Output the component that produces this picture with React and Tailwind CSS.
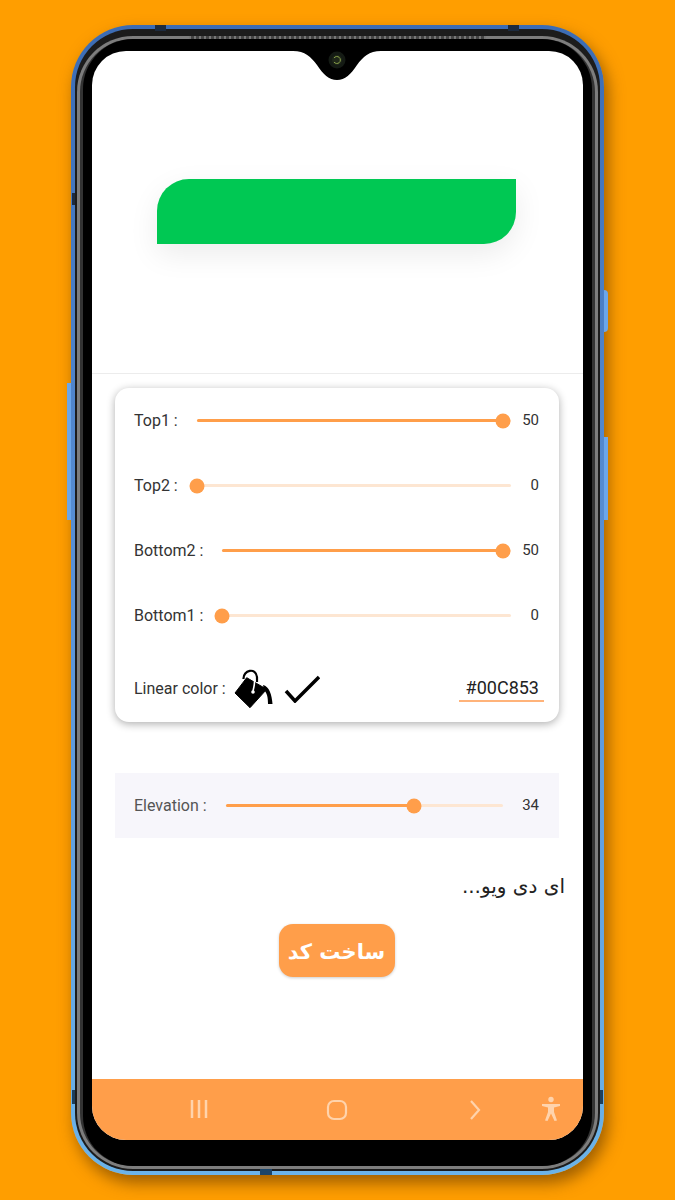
import React from "react";

const rows = [
  { label: "Top1 :", value: 50 },
  { label: "Top2 :", value: 0 },
  { label: "Bottom2 :", value: 50 },
  { label: "Bottom1 :", value: 0 },
];

// Track with thumb; inset = px of track left past the thumb at max
function Slider({ value, inset = 8 }) {
  const pct = value / 50;
  return (
    <div className="relative h-[3px] flex-1 rounded-full bg-[#fde6d2]">
      <div
        className="absolute left-0 top-0 h-full rounded-full bg-[#ff9e4a]"
        style={{ width: `calc((100% - ${inset}px) * ${pct})` }}
      />
      <div
        className="absolute top-1/2 h-[15px] w-[15px] -translate-x-1/2 -translate-y-1/2 rounded-full bg-[#ff9e4a]"
        style={{ left: `calc((100% - ${inset}px) * ${pct})` }}
      />
    </div>
  );
}

function BucketIcon() {
  return (
    <svg width="40" height="40" viewBox="0 0 40 40" className="block">
      <path d="M1 24 L12.700 8.700 L32.700 20.300 L16 38.700 Z" fill="#000" strokeLinejoin="round" stroke="#000" strokeWidth="1" />
      <path d="M9.500 10 C9 1 22 -2 23 8 L23 13" fill="none" stroke="#000" strokeWidth="2.200" />
      <path d="M20.500 10 C21 14 20 18 19 22" fill="none" stroke="#fff" strokeWidth="1.600" />
      <circle cx="19" cy="23" r="1.800" fill="#fff" />
      <path d="M29 16 C35 17 38 26 38.500 35 L34 35 C34 28 33 24 30 21 Z" fill="#000" />
    </svg>
  );
}

function CheckIcon() {
  return (
    <svg width="36" height="28" viewBox="0 0 36 28" className="block">
      <path d="M2 16 L11 26 L35 2" fill="none" stroke="#000" strokeWidth="3.500" />
    </svg>
  );
}

function NavBar() {
  return (
    <div className="relative mt-auto h-[61px] bg-[#ff9e4a] text-[#ffd3ac]">
      <svg width="18" height="20" viewBox="0 0 18 20" className="absolute left-[98px] top-[20px]">
        <path d="M2 1 V19 M9 1 V19 M16 1 V19" stroke="currentColor" strokeWidth="2.500" />
      </svg>
      <svg width="22" height="22" viewBox="0 0 22 22" className="absolute left-[234px] top-[20px]">
        <rect x="2" y="2" width="18" height="18" rx="6" fill="none" stroke="currentColor" strokeWidth="2.200" />
      </svg>
      <svg width="12" height="22" viewBox="0 0 12 22" className="absolute left-[377px] top-[20px]">
        <path d="M2 2 L10 11 L2 20" fill="none" stroke="currentColor" strokeWidth="2.200" />
      </svg>
      <svg width="20" height="26" viewBox="0 0 20 26" className="absolute left-[449px] top-[17px]">
        <circle cx="10" cy="3.500" r="2.700" fill="currentColor" />
        <path d="M1 8 H19 V10 L13 11.500 L13 16 L16 24.500 L13.500 25 L10 17.500 L6.500 25 L4 24.500 L7 16 L7 11.500 L1 10 Z" fill="currentColor" />
      </svg>
    </div>
  );
}

export default function App() {
  return (
    <div className="flex h-[1200px] w-[675px] justify-center bg-[#ff9e00] pt-[25px] font-['Roboto',sans-serif]">
      {/* Phone body */}
      <div className="relative h-[1150px] w-[533px] rounded-[62px] bg-gradient-to-b from-[#3c6cb4] via-[#5b93d8] to-[#6cb3e8] p-[4px] shadow-[4px_8px_16px_rgba(90,50,0,0.6)]">
        {/* Side buttons and antenna marks */}
        <div className="absolute left-[-4px] top-[358px] h-[137px] w-[4px] bg-[#6ba6ea]" />
        <div className="absolute right-[-4px] top-[265px] h-[42px] w-[4px] rounded-r-sm bg-[#6ba6ea]" />
        <div className="absolute right-[-4px] top-[412px] h-[83px] w-[4px] bg-[#6ba6ea]" />
        <div className="absolute left-[84px] top-0 h-[6px] w-[11px] bg-[#1d2b3f]" />
        <div className="absolute right-[85px] top-0 h-[6px] w-[11px] bg-[#1d2b3f]" />
        <div className="absolute bottom-0 left-[189px] h-[6px] w-[12px] bg-[#1b4468]" />
        <div className="absolute left-[1px] top-[168px] h-[12px] w-[3px] bg-[#1d2b3f]" />
        <div className="absolute left-[1px] top-[1065px] h-[14px] w-[3px] bg-[#1d3f5c]" />
        <div className="absolute right-[1px] top-[1065px] h-[14px] w-[3px] bg-[#1d3f5c]" />

        {/* Bezel layers */}
        <div className="h-full rounded-[58px] bg-[#1c1c1c] px-[2px] pb-[2px] pt-[7px]">
          <div className="relative h-full rounded-[56px] bg-[#7d7d7d] px-[3px] pb-[3px] pt-[3px]">
            <div className="absolute left-[112px] right-[112px] top-0 h-[3px] bg-[repeating-linear-gradient(90deg,#777777_0_2px,#444444_2px_5px)]" />
            <div className="h-full rounded-[53px] bg-[#333333] px-[3px]">
              <div className="h-full rounded-[50px] bg-black px-[9px] pb-[26px] pt-[12px]">
                {/* Screen */}
                <div className="relative flex h-full flex-col overflow-hidden rounded-[34px] bg-white">
                  {/* Notch */}
                  <svg width="88" height="29" viewBox="0 0 88 29" className="absolute left-[201px] top-0">
                    <path d="M0 0 C12 0 18 6 24 14 C30 23 36 29 44 29 C52 29 58 23 64 14 C70 6 76 0 88 0 Z" fill="#000" />
                    <circle cx="44" cy="9" r="8.500" fill="#141a14" />
                    <circle cx="44" cy="9" r="5" fill="#20281a" />
                    <path d="M41 7 A3.500 3.500 0 1 1 41 11" fill="none" stroke="#8aa24a" strokeWidth="1" />
                  </svg>

                  {/* Preview */}
                  <div className="flex h-[323px] items-center justify-center border-b border-[#ececec] pb-[2px] pr-[2px]">
                    <div className="h-[65px] w-[359px] rounded-br-[32px] rounded-tl-[32px] bg-[#00c853] shadow-[0_10px_30px_rgba(0,0,0,0.08)]" />
                  </div>

                  {/* Corner sliders */}
                  <div className="mx-[23px] mt-[14px] h-[334px] w-[444px] rounded-[14px] bg-white pl-[19px] pr-[20px] shadow-[0_2px_8px_rgba(0,0,0,0.32)]">
                    {rows.map((row) => (
                      <div key={row.label} className="flex h-[65px] items-center text-[16px] text-[#333333]">
                        <span>{row.label}</span>
                        <div className="ml-[19px] flex flex-1 items-center">
                          <Slider value={row.value} />
                        </div>
                        <span className="w-[28px] text-right text-[15px]">{row.value}</span>
                      </div>
                    ))}
                    <div className="flex h-[69px] items-center pt-[12px] text-[16px] text-[#333333]">
                      <span>Linear color :</span>
                      <div className="ml-[8px] flex items-center gap-[10px]">
                        <BucketIcon />
                        <CheckIcon />
                      </div>
                      <div className="-mr-[5px] ml-auto w-[85px] border-b-2 border-[#ffb37a] pr-[5px] text-right text-[18px] leading-[24px] text-[#222222]">
                        #00C853
                      </div>
                    </div>
                  </div>

                  {/* Elevation */}
                  <div className="mx-[23px] mt-[51px] flex h-[65px] w-[444px] items-center bg-[#f7f6fb] pl-[19px] pr-[20px] text-[16px] text-[#555555]">
                    <span>Elevation :</span>
                    <div className="ml-[19px] flex flex-1 items-center">
                      <Slider value={34} inset={0} />
                    </div>
                    <span className="ml-[19px] w-[17px] text-right text-[15px] text-[#333333]">34</span>
                  </div>

                  <div dir="rtl" className="mt-[31px] pr-[18px] font-['DejaVu_Sans',sans-serif] text-[20px] leading-[34px] text-[#222222]">
                    ای دی ویو...
                  </div>

                  <div className="mt-[21px] flex justify-center pr-[2px]">
                    <button className="h-[53px] w-[116px] rounded-[14px] bg-[#ff9e4a] pt-[4px] font-['DejaVu_Sans',sans-serif] text-[21px] font-bold text-white shadow-[0_1px_3px_rgba(0,0,0,0.2)]">
                      ساخت کد
                    </button>
                  </div>

                  <NavBar />
                </div>
              </div>
            </div>
          </div>
        </div>
      </div>
    </div>
  );
}
